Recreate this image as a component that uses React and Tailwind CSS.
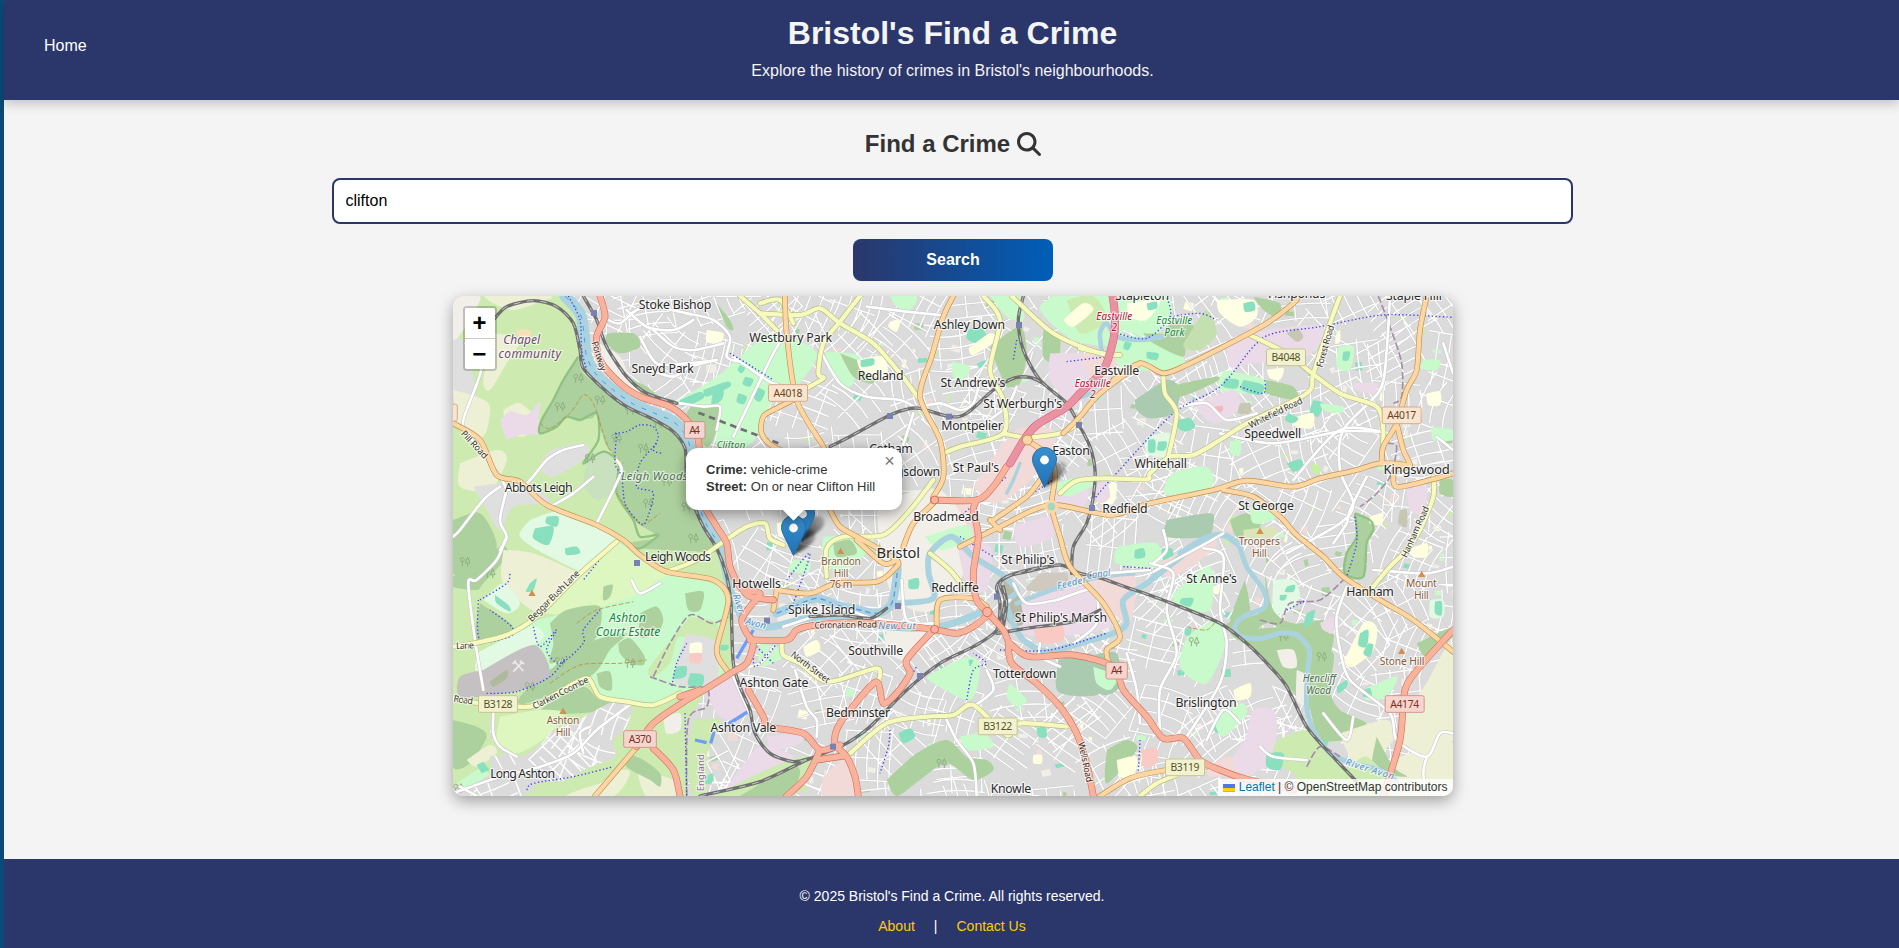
import React from "react";
import { FaMagnifyingGlass } from "react-icons/fa6";

/* ---------- geometry helpers (map units: 3 per pixel) ---------- */
function pts(s) {
  return s.trim().split(/\s+/).map((p) => p.split(",").map(Number));
}

function smooth(s) {
  const p = pts(s);
  let d = `M${p[0][0]} ${p[0][1]}`;
  for (let i = 0; i < p.length - 1; i++) {
    const a = p[i - 1] || p[i];
    const b = p[i];
    const c = p[i + 1];
    const e = p[i + 2] || c;
    d += `C${(b[0] + (c[0] - a[0]) / 7).toFixed(1)} ${(b[1] + (c[1] - a[1]) / 7).toFixed(1)} ${(c[0] - (e[0] - b[0]) / 7).toFixed(1)} ${(c[1] - (e[1] - b[1]) / 7).toFixed(1)} ${c[0]} ${c[1]}`;
  }
  return d;
}

function makeRandom(seed) {
  let s = seed;
  return () => {
    s = (s * 1664525 + 1013904223) % 4294967296;
    return s / 4294967296;
  };
}

/* Residential street blocks: each jittered site gets its own small rotated grid. */
function buildStreets() {
  const r = makeRandom(77);
  let d = "";
  for (let gy = 0; gy < 11; gy++) {
    for (let gx = 0; gx < 21; gx++) {
      const cx = gx * 150 + r() * 90;
      const cy = gy * 150 + r() * 90;
      const a = r() * Math.PI;
      const ca = Math.cos(a);
      const sa = Math.sin(a);
      const step = 27 + r() * 17;
      const bend = (r() - 0.5) * 50;
      const at = (u, v) => `${(cx + u * ca - v * sa).toFixed(0)} ${(cy + u * sa + v * ca).toFixed(0)}`;
      for (let v = -72; v <= 72; v += step) {
        const l = 60 + r() * 34;
        d += `M${at(-l, v)}Q${at(0, v + bend)} ${at(l, v)}`;
      }
      for (let u = -80; u <= 80; u += 60 + r() * 36) {
        d += `M${at(u, -72)}L${at(u + bend / 4, 72)}`;
      }
    }
  }
  return d;
}

function buildPatches() {
  const r = makeRandom(9);
  const fills = ["#c8facc", "#ffffe0", "#88e0be", "#cdebb0", "#f2dad9", "#f2efe9", "#add19e", "#f2efe9"];
  return Array.from({ length: 300 }, (_, i) => {
    const x = 760 + r() * 2260;
    const y = 20 + r() * 1490;
    const w = 8 + r() * 22;
    const h = 7 + r() * 18;
    const k = (r() - 0.5) * 14;
    return { fill: fills[i % fills.length], d: `M${x} ${y}l${w} ${k}l${-k} ${h}l${-w} ${-k}z` };
  });
}

const STREETS = buildStreets();
const PATCHES = buildPatches();

/* ---------- land use ---------- */
const RURAL = "39,18 370,18 425,90 440,210 520,300 640,370 735,440 765,620 850,790 880,930 880,1130 800,1200 740,1300 745,1518 39,1518";
const VILLAGE = "150,1290 165,1340 185,1375 240,1400 300,1365 340,1320 400,1300 450,1270 520,1235 575,1240 560,1310 520,1350 525,1400 480,1420 430,1440 380,1470 300,1480 240,1518 39,1518 60,1480 150,1450 150,1400 190,1395 150,1340";

const AREAS = [
  ["#f2efe9", "39,18 120,18 100,70 70,120 39,150"],
  ["#e0dfdf", "39,150 75,160 110,330 80,380 39,340"],
  ["#eef0d5", "130,18 330,18 290,40 220,60 160,40"],
  ["#eef0d5", "165,130 240,150 200,220 150,300 130,270"],
  ["#eef0d5", "39,300 110,320 150,350 130,440 60,420"],
  ["#f7dfb8", "230,120 270,120 270,145 235,140"],
  ["#eef0d5", "190,360 240,340 300,400 250,440 200,420"],
  ["#ebdbe8", "180,390 210,365 260,375 300,335 295,390 310,430 240,435 200,445"],
  ["#add19e", "415,200 430,250 520,320 640,385 720,420 745,480 765,600 800,710 845,780 780,785 600,775 560,760 650,740 580,690 530,610 545,520 500,470 470,390 420,390 380,380 350,410 300,430 305,390 340,330 370,270"],
  ["#cdebb0", "470,370 480,460 430,520 420,500 400,460"],
  ["#e0dfdf", "330,480 430,460 440,500 340,560 300,530"],
  ["#c9e1bf", "450,490 500,485 530,540 510,610 470,630 430,580"],
  ["#eef0d5", "60,520 170,480 200,510 150,600 60,590"],
  ["#e0dfdf", "100,590 200,580 290,600 330,640 220,650 180,720 130,640"],
  ["#add19e", "39,690 120,670 170,760 140,830 90,830 39,850"],
  ["#add19e", "39,860 180,770 200,800 130,880 110,900 39,890"],
  ["#eef0d5", "190,780 280,790 430,860 400,900 300,970 190,880"],
  ["#e2f9e4", "270,690 360,665 480,720 540,760 460,850 330,800 240,740"],
  ["#88e0be", "320,680 355,680 350,710 318,700"],
  ["#88e0be", "285,715 340,710 325,765 280,745"],
  ["#88e0be", "375,775 410,770 420,790 380,795"],
  ["#e2f9e4", "130,930 190,880 240,940 200,970"],
  ["#88e0be", "165,915 205,945 210,965 170,940"],
  ["#88e0be", "270,880 290,865 280,900 258,905"],
  ["#add19e", "120,940 210,1000 215,1040 110,1050"],
  ["#def6c0", "540,760 680,850 700,880 480,960 310,965 410,865"],
  ["#c8facc", "480,950 600,910 680,860 820,880 865,930 850,1000 830,1080 850,1140 790,1190 640,1240 500,1225 430,1160 320,1140 250,1010"],
  ["#cdebb0", "750,980 830,1000 820,1080 720,1040 690,1120 640,1160 630,1130"],
  ["#add19e", "330,1000 380,960 480,950 470,1040 400,1090 330,1120 340,1060"],
  ["#add19e", "330,1140 440,1060 560,1030 510,1080 450,1160 260,1240 240,1220"],
  ["#add19e", "535,1060 570,1045 612,1095 610,1125 570,1120 540,1090"],
  ["#add19e", "600,970 650,950 670,990 650,1030 600,1040"],
  ["#add19e", "735,910 790,905 780,960 745,960"],
  ["#add19e", "490,890 518,885 510,920 490,930"],
  ["#add19e", "470,1150 510,1145 515,1200 480,1190"],
  ["#e2f9e4", "110,1090 270,1010 310,1030 290,1060 120,1150"],
  ["#c5c1c2", "130,1140 280,1065 330,1150 260,1195 160,1215 60,1220 60,1160"],
  ["#aeb99d", "150,1175 200,1140 200,1165 160,1190"],
  ["#add19e", "39,1290 110,1310 140,1340 90,1420 39,1430"],
  ["#add19e", "340,1230 430,1190 480,1230 560,1240 500,1260 420,1270 300,1270"],
  ["#def6c0", "180,1280 300,1260 370,1270 320,1340 230,1390 170,1360"],
  ["#eef0d5", "80,1410 150,1365 170,1390 110,1430"],
  ["#add19e", "60,1340 110,1310 110,1350 70,1380"],
  ["#eef0d5", "480,1480 540,1440 570,1450 520,1518 380,1518"],
  ["#eef0d5", "590,1440 700,1470 710,1518 620,1518"],
  ["#add19e", "560,1390 610,1410 660,1450 660,1490 630,1470 560,1430"],
  ["#f2efe9", "670,1280 720,1270 720,1320 680,1330"],
  ["#e0dfdf", "740,1030 830,1060 830,1180 790,1190 700,1170"],
  ["#ffffe5", "750,1060 785,1060 780,1110 750,1090"],
  ["#f9c9c4", "750,1090 785,1090 780,1120 748,1115"],
  ["#88e0be", "710,1130 740,1130 735,1160 700,1165"],
  ["#88e0be", "750,1150 790,1155 785,1190 745,1185"],
  ["#88e0be", "842,1065 865,1065 862,1080 842,1080"],
  ["#ebdbe8", "800,1200 900,1160 930,1240 880,1290 830,1270"],
  ["#cdebb0", "760,1290 840,1290 820,1350 800,1400 800,1500 760,1518 740,1400"],
  ["#ebdbe8", "960,1360 1060,1400 1000,1460 860,1500"],
  ["#88e0be", "795,1460 820,1450 815,1480 795,1480"],
  ["#cdebb0", "820,1518 1000,1430 1110,1400 1060,1518"],
  ["#add19e", "900,1518 1050,1430 1080,1450 1040,1518"],
  ["#c8facc", "700,340 830,260 900,200 1000,130 1130,190 1060,300 1000,330 950,440 900,480 830,460 840,360 760,350"],
  ["#c8facc", "960,190 1030,140 1090,260 1050,270"],
  ["#add19e", "750,350 840,350 830,420 800,470 740,390"],
  ["#88e0be", "720,330 780,305 790,325 730,350"],
  ["#88e0be", "790,300 860,275 870,290 800,320"],
  ["#88e0be", "900,225 915,235 905,250 893,240"],
  ["#88e0be", "915,260 940,268 930,290 908,282"],
  ["#88e0be", "950,290 975,305 960,335 940,320"],
  ["#88e0be", "895,310 920,320 912,342 890,335"],
  ["#88e0be", "820,300 850,300 845,330 815,345"],
  ["#add19e", "500,130 580,130 600,170 540,190 500,160"],
  ["#add19e", "540,250 620,290 660,320 700,330 690,350 600,320"],
  ["#f2efe9", "460,150 540,200 570,270 600,310 500,240"],
  ["#ffffe5", "800,120 850,130 840,160 800,155"],
  ["#add19e", "830,40 870,90 880,120 860,110"],
  ["#c8facc", "1155,185 1260,200 1230,290 1170,250"],
  ["#add19e", "1200,190 1290,230 1300,280 1240,260"],
  ["#ffffe5", "1250,210 1330,200 1340,260 1270,250"],
  ["#88e0be", "1262,210 1300,205 1300,225 1265,230"],
  ["#c8facc", "1350,18 1430,18 1410,60 1370,50"],
  ["#ffffe5", "1350,95 1380,90 1370,125 1345,110"],
  ["#88e0be", "1585,120 1620,110 1640,140 1610,160 1580,145"],
  ["#ffffe0", "1585,175 1650,130 1670,150 1600,195"],
  ["#c8facc", "1535,215 1590,230 1570,270 1540,260"],
  ["#88e0be", "1610,220 1640,210 1620,235"],
  ["#add19e", "1650,170 1740,110 1760,190 1740,280 1700,290 1680,250"],
  ["#c8facc", "1650,18 1740,18 1750,90 1700,80"],
  ["#c8facc", "1840,18 2020,18 2040,160 1900,150 1800,60"],
  ["#cdebb0", "1880,30 1960,18 2000,90 1920,130"],
  ["#ffffe0", "1870,90 1930,40 1960,60 1900,110"],
  ["#add19e", "1810,120 1860,150 1850,220 1810,200"],
  ["#ebdbe8", "1830,190 1960,200 1970,290 1900,340 1830,270"],
  ["#f2dad9", "1920,190 2040,190 2010,260 1960,280"],
  ["#f2dad9", "1600,590 1730,420 1850,430 1780,560 1670,640"],
  ["#f2dad9", "1490,650 1610,650 1600,780 1490,740"],
  ["#f2efe9", "1310,640 1500,600 1600,780 1480,960 1360,920 1320,760"],
  ["#c8facc", "1455,740 1580,705 1590,750 1500,780"],
  ["#ebdbe8", "1720,710 1830,680 1840,740 1740,770"],
  ["#ebdbe8", "1840,600 1940,590 1930,650 1840,650"],
  ["#c8facc", "1840,580 1930,560 1970,580 1880,620"],
  ["#c8facc", "1150,740 1290,740 1280,790 1200,850 1150,800"],
  ["#add19e", "1180,760 1230,750 1250,790 1190,800"],
  ["#88e0be", "1405,870 1435,865 1435,895 1407,895"],
  ["#c8facc", "1060,810 1110,815 1100,850 1045,840"],
  ["#ffffe0", "1010,700 1060,690 1070,720 1020,740"],
  ["#f2efe9", "1020,940 1190,960 1150,1010 1020,1000"],
  ["#ebdbe8", "1700,940 2000,880 2010,1010 1800,1040 1730,1010"],
  ["#f9c9c4", "1780,1020 1860,1000 1870,1050 1800,1060"],
  ["#b7b9a5", "1690,870 1730,890 1750,1000 1700,990"],
  ["#f2dad9", "1920,860 2080,850 2070,1000 2010,960 1960,900"],
  ["#cfc9bf", "1800,850 1880,850 1870,900 1760,900"],
  ["#ebdbe8", "1550,750 1650,770 1640,900 1580,880"],
  ["#f2efe9", "1340,1020 1480,1030 1400,1110 1340,1080"],
  ["#c8facc", "1460,1160 1580,1100 1620,1130 1590,1230 1480,1180"],
  ["#88e0be", "1585,1110 1600,1110 1590,1130"],
  ["#ffffe0", "1090,1070 1130,1050 1140,1080 1100,1100"],
  ["#c8facc", "960,1060 1010,1070 1030,1100 960,1130"],
  ["#aacbaf", "1855,1110 1960,1095 1980,1210 1855,1205"],
  ["#aacbaf", "1960,1095 2030,1090 2040,1190 1980,1210"],
  ["#c8facc", "1710,1180 1760,1230 1730,1250 1700,1220"],
  ["#88e0be", "1375,1330 1410,1315 1425,1340 1390,1360"],
  ["#88e0be", "1790,1315 1815,1310 1820,1340 1795,1340"],
  ["#ffffe0", "1780,1395 1805,1395 1805,1420 1780,1420"],
  ["#add19e", "1340,1470 1430,1390 1520,1350 1580,1400 1640,1410 1660,1440 1600,1470 1520,1420 1440,1470 1370,1518"],
  ["#c8facc", "1560,1340 1630,1330 1660,1370 1580,1380"],
  ["#f2dad9", "1150,1460 1230,1400 1260,1518 1150,1518"],
  ["#ebdbe8", "980,1340 1080,1330 1080,1360 1000,1380"],
  ["#c8facc", "2030,30 2180,18 2190,90 2130,140 2040,110"],
  ["#ffffe5", "2060,40 2160,30 2120,90 2070,80"],
  ["#88e0be", "2120,40 2150,35 2150,55 2125,60"],
  ["#add19e", "2180,110 2230,90 2270,120 2240,160 2180,150"],
  ["#c8facc", "2030,130 2100,140 2200,150 2230,200 2220,240 2040,230"],
  ["#add19e", "2110,130 2220,140 2230,200 2140,160"],
  ["#88e0be", "2055,155 2075,160 2065,180 2050,175"],
  ["#88e0be", "2120,185 2155,190 2150,210 2122,205"],
  ["#c4e0b0", "2250,130 2300,60 2330,130 2280,180 2230,170"],
  ["#ffffe5", "2330,30 2440,30 2450,80 2400,110 2340,70"],
  ["#88e0be", "2410,40 2440,35 2445,60 2415,65"],
  ["#add19e", "2440,20 2520,40 2510,80 2470,60"],
  ["#ebdbe8", "2360,150 2480,120 2650,110 2600,200 2440,220 2370,230"],
  ["#c7c7b4", "2540,130 2570,115 2590,140 2570,155"],
  ["#aacbaf", "2085,330 2180,270 2220,300 2200,370 2130,385 2090,360"],
  ["#add19e", "2180,290 2330,260 2320,280 2220,320"],
  ["#c8facc", "2350,240 2480,270 2480,310 2340,300"],
  ["#88e0be", "2355,265 2395,270 2390,295 2350,290"],
  ["#88e0be", "2410,270 2470,285 2460,315 2405,300"],
  ["#add19e", "2480,270 2560,290 2570,330 2480,310"],
  ["#ebdbe8", "2270,340 2380,300 2400,350 2330,400 2280,370"],
  ["#c7c7b4", "2400,340 2430,340 2430,370 2395,370"],
  ["#f9b6b8", "2325,350 2348,348 2346,365 2325,365"],
  ["#ffffe5", "2480,240 2530,235 2520,270 2490,265"],
  ["#88e0be", "2620,330 2650,340 2635,380 2610,365"],
  ["#c8facc", "2640,340 2710,350 2700,370 2650,360"],
  ["#ffffe0", "2570,380 2620,370 2615,415 2560,405"],
  ["#88e0be", "2545,370 2575,385 2560,400 2535,390"],
  ["#88e0be", "2215,390 2250,385 2265,410 2235,425 2210,410"],
  ["#e2f9e4", "2120,440 2190,430 2180,500 2120,490"],
  ["#88e0be", "2125,450 2145,450 2145,485 2125,485"],
  ["#88e0be", "2155,455 2180,455 2175,480 2152,480"],
  ["#c8facc", "2170,600 2200,550 2300,530 2315,590 2190,615"],
  ["#ffffe5", "2690,130 2700,120 2700,155 2685,160"],
  ["#c8facc", "2695,170 2740,170 2730,240 2690,230"],
  ["#88e0be", "2710,185 2730,185 2725,210 2708,210"],
  ["#ebdbe8", "2740,280 2810,280 2800,310 2750,300"],
  ["#c8facc", "2950,210 3000,210 2990,240 2940,235"],
  ["#ffffe5", "2960,310 3000,305 3000,345 2965,345"],
  ["#c8facc", "2975,410 3039,420 3039,450 2980,450"],
  ["#c8facc", "2370,455 2400,450 2400,495 2370,490"],
  ["#88e0be", "2540,520 2580,508 2590,530 2560,545"],
  ["#c5f0a0", "2615,520 2640,530 2635,555 2615,540"],
  ["#ffffe5", "1985,590 2030,580 2020,640 1980,640"],
  ["#aacbaf", "2180,690 2310,670 2320,700 2300,740 2180,740"],
  ["#add19e", "2370,690 2420,670 2460,700 2450,740 2390,740"],
  ["#c8facc", "2430,650 2500,650 2500,690 2440,700"],
  ["#dbe5b8", "2410,720 2500,710 2500,740 2420,745"],
  ["#add19e", "2745,670 2790,690 2800,720 2780,760 2770,860 2715,850 2720,790 2750,740"],
  ["#ffffe0", "2790,680 2830,670 2820,705 2790,700"],
  ["#ebdbe8", "2900,600 2960,590 2950,670 2910,660"],
  ["#c7c7b4", "2880,660 2900,660 2900,710 2875,700"],
  ["#add19e", "3000,570 3039,570 3039,620 3000,610"],
  ["#ebdbe8", "2000,560 2010,620 1980,640 1960,600"],
  ["#c8facc", "2030,770 2150,760 2150,830 2030,820"],
  ["#88e0be", "2085,780 2110,775 2115,800 2085,805"],
  ["#88e0be", "2165,775 2195,775 2200,805 2170,810"],
  ["#f2dad9", "2140,830 2290,750 2330,770 2200,860"],
  ["#c8facc", "2200,910 2310,830 2310,960 2210,950"],
  ["#88e0be", "2225,925 2260,925 2250,950 2220,940"],
  ["#c8facc", "2240,1040 2330,990 2360,1050 2300,1180 2220,1130"],
  ["#88e0be", "2235,1015 2255,1015 2250,1035 2235,1035"],
  ["#ffffe5", "2320,890 2340,890 2338,910 2320,910"],
  ["#add19e", "2415,870 2430,960 2400,1010 2370,1000 2390,930"],
  ["#add19e", "2475,850 2500,960 2560,1000 2650,990 2670,1020 2540,1020 2480,1000 2400,1050 2360,1010 2380,990 2470,960"],
  ["#e2f9e4", "2500,870 2560,870 2580,920 2540,970 2500,960"],
  ["#88e0be", "2540,890 2565,885 2560,905 2535,905"],
  ["#88e0be", "2520,915 2540,915 2535,930 2520,930"],
  ["#88e0be", "2600,970 2625,960 2615,1000 2590,1010"],
  ["#add19e", "2370,1020 2600,1010 2680,1030 2650,1100 2610,1160 2590,1220 2530,1180 2440,1080 2380,1040"],
  ["#f2efe9", "2510,1080 2560,1080 2570,1130 2530,1130"],
  ["#add19e", "2610,1080 2680,1090 2670,1200 2700,1260 2780,1300 2760,1340 2640,1350 2610,1260 2560,1200"],
  ["#f2efe9", "2570,1140 2600,1160 2600,1240 2570,1230"],
  ["#add19e", "2640,1030 2680,1030 2670,1090 2630,1060"],
  ["#ffffe0", "2710,1120 2770,1000 2810,1010 2800,1080 2740,1130"],
  ["#88e0be", "2760,1030 2785,1020 2780,1070 2755,1065"],
  ["#88e0be", "2785,1060 2800,1065 2790,1100 2770,1090"],
  ["#88e0be", "2690,1190 2720,1170 2720,1190 2695,1210"],
  ["#c8facc", "2770,1200 2870,1160 2840,1220 2780,1230"],
  ["#88e0be", "2770,1200 2790,1195 2795,1220 2770,1220"],
  ["#ebdbe8", "2640,1000 2680,980 2680,1030 2650,1020"],
  ["#e2f9e4", "2970,930 3010,930 3010,980 2970,980"],
  ["#88e0be", "2985,935 3005,935 3005,975 2985,970"],
  ["#ffffe0", "2900,780 2960,760 2960,800 2920,800"],
  ["#add19e", "2930,1060 3039,1010 3039,1040 2960,1100"],
  ["#eef0d5", "2960,1180 3039,1060 3039,1350 2900,1380 2880,1300"],
  ["#eef0d5", "2700,1330 2840,1290 2860,1350 2780,1420 2730,1400"],
  ["#eef0d5", "2880,1400 3039,1360 3039,1518 2830,1518 2850,1440"],
  ["#add19e", "2810,1340 2860,1430 2900,1460 2800,1440"],
  ["#cdebb0", "2440,1390 2600,1320 2700,1420 2860,1518 2600,1518 2560,1450"],
  ["#ebdbe8", "2380,1400 2480,1260 2500,1320 2450,1440 2410,1470 2340,1450"],
  ["#ebdbe8", "2420,1340 2440,1260 2500,1260 2510,1330 2480,1430 2420,1430"],
  ["#88e0be", "2480,1390 2530,1390 2520,1440 2480,1430"],
  ["#ffffe0", "2380,1200 2430,1180 2430,1220 2390,1230"],
  ["#88e0be", "2325,1300 2365,1300 2360,1330 2325,1325"],
  ["#c8facc", "2320,1290 2400,1240 2420,1270 2350,1340"],
  ["#add19e", "2000,1380 2060,1350 2090,1380 2000,1480"],
  ["#ffffe0", "2030,1410 2090,1400 2080,1460 2040,1460"],
  ["#f9c9c4", "2105,1380 2150,1375 2150,1420 2110,1430"],
  ["#f2dad9", "2300,1430 2370,1400 2380,1450 2310,1460"],
  ["#c8facc", "1960,1130 2030,1160 2010,1200 1970,1180"],
  ["#cdebb0", "2700,1460 2780,1400 2850,1500 2700,1518"],
];

const WATER = [
  [34, "375,18 420,70 432,130 440,200 470,255 520,300 580,342 640,368 700,395 740,440 755,500 768,580 778,650 800,705 840,765"],
  [22, "840,765 858,850 880,925 905,980 940,1005 1000,1010 1100,985 1200,980 1330,1008 1500,1010 1640,960"],
  [26, "1010,970 1060,950 1130,925 1190,945 1260,960 1310,970 1355,940 1372,840 1362,800"],
  [18, "1375,940 1480,925 1466,850 1470,790 1535,740 1600,800 1680,850 1730,900 1700,940 1720,1000 1750,1050 1820,1085 1920,1060 2020,1030 2060,1000 2050,930 2120,880 2210,810 2290,750 2350,735 2390,760"],
  [14, "1730,940 1850,895 1980,860 2080,850"],
  [15, "2220,790 2290,745 2350,735 2395,765 2420,830 2470,900 2475,950 2410,980 2385,1010 2400,1038 2460,1046 2520,1030 2570,1035 2608,1080 2602,1150 2600,1250 2620,1320 2670,1390 2740,1420 2820,1440 2870,1475"],
  [14, "1985,180 1980,130 2000,100 2030,140 2100,150 2170,140"],
  [12, "1980,270 1950,310 1900,330"],
  [10, "1740,520 1720,570 1700,610"],
];

const WHITE = [
  "75,160 125,230 70,390 90,440 180,560 200,600",
  "180,590 130,630 60,720 39,740", "200,600 180,690 200,740 180,780",
  "200,600 260,580 320,510 370,480 430,465", "340,645 400,610 460,560", "470,700 520,600 545,540 530,510",
  "195,750 170,810 110,870 85,880 105,1050 130,1200", "160,1270 160,1330 180,1370 230,1400",
  "39,1510 180,1460 300,1430 400,1390 470,1320 575,1240", "60,1490 110,1518", "430,1390 420,1330 450,1310",
  "575,870 600,910 660,880", "880,1140 960,1120 1000,1070", "880,1160 920,1250 960,1330",
  "505,90 540,100 590,60 640,50 740,70 820,90 870,140 860,200 900,215", "560,60 620,110 700,120 760,90", "600,140 650,220 740,220 830,210", "640,120 700,170 760,180 850,160",
  "630,240 700,260 750,230 830,210", "960,18 830,18", "1040,130 1000,190 880,440", "720,340 790,350 840,350 830,420",
  "880,200 980,270 1030,290", "1140,180 1200,280 1280,320 1380,330 1440,360", "1280,50 1400,65 1500,75",
  "1440,350 1500,340 1560,360 1600,340 1620,270", "1420,370 1380,490 1340,560", "1730,290 1700,350 1620,410",
  "1720,880 1760,940 1850,930 1960,900 1970,1000 1900,1060", "1385,870 1400,990 1480,1000",
  "1030,1010 1200,960 1300,985 1480,1010", "1065,1140 1100,1250 1130,1290 1130,1340", "1520,1290 1550,1350 1600,1420 1610,1518",
  "1640,1140 1660,1200 1600,1250", "1800,1060 1800,1100 1860,1130", "1710,930 1680,960",
  "2130,820 2200,850 2180,960 2210,1090 2160,1200 2160,1330", "2290,775 2350,800 2340,960 2360,1060 2340,1180 2240,1340",
  "2140,845 2280,770 2350,730", "2000,850 2130,840", "2560,570 2700,420 2850,430", "2340,430 2500,460 2700,425 2820,425",
  "2850,18 2840,180 2820,300 2710,420 2700,540 2740,640 2700,700 2540,790", "2780,560 2730,660 2720,700 2680,760",
  "2720,890 2690,980 2700,1080 2730,1170 2850,1270 2870,1350 2960,1400 3000,1330 3039,1330",
  "2800,840 2960,850 3039,830", "2960,1400 2950,1450 2960,1518", "3010,160 3039,250", "2990,440 3039,480",
  "2460,1370 2500,1400 2600,1410", "2400,1300 2350,1260 2300,1350", "2220,350 2300,340 2360,390 2450,370",
  "2650,1270 2720,1350 2740,1280", "2170,720 2180,780 2140,820", "2060,1090 2090,1200 2100,1300",
];

const YELLOW = [
  "960,70 1080,75 1140,55 1200,100 1300,160 1380,250 1440,330", "1260,18 1200,95 1150,160 1135,250 1150,265 1090,300",
  "900,18 960,70 1010,120", "1630,18 1680,90 1650,240 1690,330 1690,430 1560,470 1510,490", "1690,430 1760,442 1860,430 1920,400",
  "1715,18 1840,130 1980,190 2040,195", "1920,175 2010,195", "2430,135 2540,190 2610,245 2700,310 2810,350 2830,420 2825,500",
  "2700,18 2670,100 2620,250 2600,310 2420,400 2340,450 2260,495 2190,500 2130,550 2120,568 2000,565 1910,572 1860,610",
  "2170,250 2175,310 2210,370 2185,500", "2980,560 2980,620 2940,720 2900,780 2850,830 2800,890",
  "39,1070 100,1060 200,1035 290,980 410,860 530,755", "39,1225 120,1240 270,1250 350,1210 440,1165 480,1220 560,1235 640,1245 720,1210",
  "1025,1060 1030,1095 1080,1120 1165,1175 1310,1135 1315,1180", "1230,1390 1340,1300 1460,1280 1540,1275 1600,1245 1700,1335 1740,1300 1880,1310",
  "1480,570 1410,660 1330,735 1210,740 1160,775 1160,860", "680,845 770,810 850,755 920,710 975,700 990,745 1030,765",
  "2100,1518 2150,1480 2210,1455", "1470,790 1530,840 1570,890", "960,40 1020,30 1060,100",
];

const ORANGE = [
  "39,400 120,450 170,555 240,575 320,645 470,705 550,750 600,795 680,845 820,870 865,930 830,1080 860,1140",
  "1035,18 1040,130 1070,330 1150,470 1180,540", "1070,325 1010,355 970,380 965,430 1000,470 1080,500",
  "1540,18 1510,80 1475,200 1440,320 1500,450 1510,560 1480,620", "2100,220 1980,310 1920,380 1870,430",
  "1760,450 1830,500 1845,560 1835,650 1860,740 1890,830 1990,940 2040,1040 2000,1080 2010,1130",
  "1660,690 1760,620 1800,570", "1560,770 1680,710 1830,645 2010,675 2130,640 2320,600 2420,572 2560,590 2640,565 2750,540 2820,520 2910,525",
  "2350,600 2440,620 2520,680 2570,735 2650,800 2710,860 2820,930 2920,990 3039,1085",
  "2020,270 2100,220 2170,250 2240,225 2370,160 2480,100 2560,40 2575,18",
  "2960,18 2940,120 2930,240 2900,300 2870,400 2830,470 2825,520", "2870,400 2890,480 2910,530 2865,540 2870,590 2970,570 3039,550",
  "600,1360 540,1430 465,1518", "1980,1518 2070,1465 2180,1440 2300,1430", "1490,1010 1500,930 1600,925 1640,950",
  "1390,770 1420,700 1480,640", "1010,900 1110,910 1190,880 1310,875 1360,840 1370,810 1260,745 1200,710 1170,660", "1010,900 1000,960",
  "1650,690 1680,720", "1250,750 1330,820 1370,810",
];

const RED = [
  "480,18 495,80 470,140 480,210 540,280 600,320 690,350 740,390 775,450 780,560 790,640 830,710 860,760 870,830 905,895 960,910 930,950 905,990 920,1030 940,1060 920,1120 880,1145 800,1195 740,1230 640,1300 590,1370",
  "780,1200 720,1220", "640,1375 700,1440 720,1518", "925,1200 970,1280 985,1310 1090,1330 1140,1380 1200,1365",
  "930,1050 1040,1050 1070,1020 1130,1005 1260,998 1460,1015 1550,1030 1600,1010 1650,970",
  "1700,530 1660,590 1610,630 1480,630", "1610,630 1600,660 1615,740 1600,850 1610,930 1640,965 1690,1020 1710,1060 1770,1100 1900,1095 2020,1130 2050,1200 2120,1280 2170,1345 2230,1345 2280,1410 2340,1440 2420,1468 2560,1500",
  "1705,1060 1715,1120 1790,1180 1860,1250 1910,1330 1940,1420 1960,1518",
  "1480,1020 1400,1110 1410,1150 1370,1210 1330,1240 1315,1180 1290,1190 1200,1300 1185,1360 1220,1400 1245,1460 1255,1518",
  "1140,1380 1100,1460 1040,1518", "1130,1410 1210,1398", "3039,1020 2940,1130 2895,1200 2880,1350 2830,1518",
  "905,895 930,920 1000,930",
];

const MOTORWAY = ["2018,18 2025,80 2020,150 1990,240 1920,310 1880,350 1790,405 1755,445 1710,520"];

const RAIL = [
  "160,90 200,50 280,32 350,50 400,100 420,180 430,235 500,305 560,350 640,388 700,425 735,475 740,560 760,640 790,710 830,775 858,850 872,930 875,1000 880,1120 900,1190 930,1260 945,1330 990,1390 1060,1415 1110,1405",
  "430,18 470,90 500,170 560,260 620,310 710,340",
  "780,1518 960,1475 1100,1410 1210,1365 1290,1310 1400,1200 1500,1120 1600,1070 1670,1020 1680,940 1670,890 1700,860 1760,845 1860,825 1920,850 1985,865 2060,892 2120,912 2220,950 2340,1000 2420,1060 2490,1130 2540,1190 2600,1310 2660,1380 2750,1475",
  "1670,1030 1760,1015 1900,995 1980,960", "1750,18 1735,90 1750,180 1800,270 1880,340 1920,410 1950,470 1965,540 1960,620 1940,700 1900,770 1895,850",
  "1170,470 1220,445 1350,375 1400,358 1440,355 1530,380 1580,370 1660,300 1720,265 1770,262 1810,280",
  "1110,980 1200,975 1290,985 1340,955", "1690,890 1700,940 1690,1010", "1680,1010 1695,930 1680,880 1720,852 1800,832",
];

const PATHS = [
  "525,430 560,425 600,405 640,410 655,440 640,480 665,490", "530,430 525,520 545,560 555,640 590,690 615,700 640,610 590,590 600,520 650,460",
  "385,18 420,90 425,180 440,240", "870,190 920,220 1000,270", "1730,150 1720,210", "1880,215 2000,200",
  "2030,130 2120,145 2190,80 2180,20", "2190,80 2280,70 2330,90", "2020,560 2200,370 2340,290 2440,170 2500,130 2640,110 2830,75 3039,82",
  "2400,290 2470,310 2475,270", "1560,680 1700,560", "1560,740 1660,800", "1730,640 1840,570", "1960,630 2010,570",
  "120,930 200,880 210,850", "115,930 120,1050 210,1040 215,1010 150,960", "280,1010 300,1070 350,1020 320,1080 360,1120 430,1060 430,1020 480,960",
  "140,1210 230,1205 330,1160 380,1100", "740,1060 710,1120 695,1190", "735,1270 740,1518", "510,770 430,870", "260,1500 280,1480 400,1460 520,1430",
  "945,1050 945,1130 1020,1050", "950,1070 1000,1120", "1580,1230 1600,1140 1640,1120 1600,1090", "1350,1320 1345,1370 1320,1450",
  "1380,1210 1430,1130", "2745,680 2750,760 2720,860", "2540,960 2600,930", "2050,830 2130,835", "2100,1350 2095,1450", "1680,1080 1830,1080 2000,1030", "1040,870 1110,790 1060,940",
];

const BOUNDARY = [
  "640,1160 690,1060 750,975 815,1000 865,980", "630,1160 720,1190 800,1195 800,1250 745,1290 740,1518",
  "2815,18 2850,110 2885,220 2885,320 2860,340", "2840,460 2870,470 2850,560 2800,620 2760,650", "2460,990 2520,1000 2550,940 2640,930 2710,870", "2600,1430 2640,1370 2700,1400",
];

/* text, x (middle), baseline y, width */
const PLACES = [
  ["Stoke Bishop", 705, 57, 218], ["Sneyd Park", 668, 249, 187], ["Abbots Leigh", 296, 606, 203], ["Westbury Park", 1052, 156, 248],
  ["Redland", 1322, 270, 137], ["Ashley Down", 1588, 116, 214], ["St Andrew's", 1599, 290, 195], ["St Werburgh's", 1748, 353, 237],
  ["Montpelier", 1596, 421, 185], ["Cotham", 1353, 490, 131], ["Kingsdown", 1408, 558, 185], ["St Paul's", 1608, 547, 139],
  ["Easton", 1893, 496, 113], ["Broadmead", 1518, 693, 197], ["Eastville", 2030, 254, 135], ["Stapleton", 2106, 31, 162],
  ["Fishponds", 2570, 23, 172], ["Staple Hill", 2922, 31, 168], ["Whitehall", 2162, 533, 157], ["Speedwell", 2498, 445, 171],
  ["Redfield", 2055, 669, 136], ["St George", 2478, 660, 167], ["Leigh Woods", 714, 812, 198], ["Hotwells", 950, 893, 146],
  ["Spike Island", 1145, 972, 202], ["Redcliffe", 1545, 905, 143], ["St Philip's", 1764, 823, 160], ["St Philip's Marsh", 1863, 996, 277],
  ["Southville", 1307, 1096, 165], ["Ashton Gate", 1002, 1191, 207], ["Ashton Vale", 910, 1327, 197], ["Bedminster", 1254, 1281, 192],
  ["Totterdown", 1754, 1164, 190], ["Knowle", 1713, 1509, 121], ["St Anne's", 2315, 879, 152], ["Brislington", 2298, 1252, 183],
  ["Hanham", 2790, 919, 142], ["Long Ashton", 248, 1465, 195],
];

const SHIELDS = [
  ["A4", 764, 420, 62, "#f7d5cf", "#c9908a", "#7d2f24"], ["A4018", 1044, 309, 117, "#f8e4cf", "#d9a98a", "#6a4320"],
  ["B4048", 2538, 202, 117, "#f2f2d0", "#c8c48f", "#52531f"], ["A4017", 2885, 376, 117, "#f8e4cf", "#d9a98a", "#6a4320"],
  ["B3128", 174, 1242, 117, "#f2f2d0", "#c8c48f", "#52531f"], ["A370", 600, 1347, 98, "#f7d5cf", "#d3968a", "#7d2f24"],
  ["B3122", 1673, 1309, 117, "#f2f2d0", "#c8c48f", "#52531f"], ["A4", 2030, 1142, 64, "#f7d5cf", "#d3968a", "#7d2f24"],
  ["B3119", 2235, 1432, 117, "#f2f2d0", "#c8c48f", "#52531f"], ["A4174", 2894, 1242, 117, "#f7d5cf", "#d3968a", "#7d2f24"],
];

/* text, x, baseline, width, colour, size, italic, rotation */
const SMALL = [
  ["Chapel", 245, 162, 110, "#734a73", 36, true, 0], ["Hill community", 236, 205, 254, "#734a73", 36, true, 0],
  ["Clifton", 873, 473, 86, "#2a8a3c", 29, true, 0], ["Leigh Woods", 643, 569, 200, "#4c7050", 34, true, 0],
  ["Ashton", 563, 995, 110, "#128a3c", 36, true, 0], ["Court Estate", 564, 1037, 194, "#128a3c", 36, true, 0],
  ["Eastville", 2203, 102, 108, "#128a3c", 30, true, 0], ["Park", 2203, 137, 60, "#128a3c", 30, true, 0],
  ["Eastville", 2023, 90, 108, "#b8123c", 30, true, 0], ["2", 2023, 124, 16, "#b8123c", 30, true, 0],
  ["Eastville", 1958, 290, 108, "#b8123c", 30, true, 0], ["2", 1958, 325, 16, "#b8123c", 30, true, 0],
  ["Brandon", 1203, 824, 120, "#8a5a3c", 31, false, 0], ["Hill", 1203, 860, 44, "#8a5a3c", 31, false, 0], ["76 m", 1203, 895, 68, "#8a5a3c", 31, false, 0],
  ["Ashton", 369, 1303, 98, "#8a5a3c", 31, false, 0], ["Hill", 369, 1338, 44, "#8a5a3c", 31, false, 0],
  ["Troopers", 2458, 766, 124, "#8a5a3c", 31, false, 0], ["Hill", 2458, 801, 44, "#8a5a3c", 31, false, 0],
  ["Mount", 2944, 892, 92, "#8a5a3c", 31, false, 0], ["Hill", 2944, 928, 44, "#8a5a3c", 31, false, 0],
  ["Stone Hill", 2886, 1125, 134, "#8a5a3c", 31, false, 0],
  ["Hencliff", 2638, 1175, 100, "#4c7050", 30, true, 0], ["Wood", 2636, 1211, 74, "#4c7050", 30, true, 0],
  ["River", 897, 950, 58, "#5a8fbf", 29, true, 72], ["Avon", 948, 1010, 62, "#5a8fbf", 29, true, 14],
  ["New Cut", 1371, 1018, 112, "#5a8fbf", 29, true, 0], ["Feeder", 1895, 888, 90, "#5a8fbf", 29, true, -14], ["Canal", 1975, 862, 72, "#5a8fbf", 29, true, -8],
  ["River Avon", 2790, 1447, 150, "#5a8fbf", 28, true, 17],
  ["Portway", 478, 208, 92, "#3a2a24", 27, false, 72], ["Pill Road", 104, 473, 104, "#3a2a14", 27, false, 47],
  ["Beggar Bush Lane", 341, 927, 205, "#33331a", 27, false, -45], ["Lane", 75, 1076, 54, "#33331a", 27, false, -3],
  ["Road", 70, 1239, 58, "#33331a", 27, false, 8], ["Clarken Coombe", 361, 1218, 184, "#33331a", 27, false, -27],
  ["North Street", 1112, 1141, 138, "#33331a", 27, false, 37], ["Coronation Road", 1217, 1014, 188, "#3a2a24", 27, false, -1],
  ["Wells Road", 1937, 1426, 122, "#3a2a24", 27, false, 78], ["Forest Road", 2655, 178, 130, "#33331a", 27, false, -74],
  ["Whitefield Road", 2506, 378, 176, "#33331a", 27, false, -26], ["Hanham Road", 2925, 735, 165, "#33331a", 27, false, -66],
  ["England", 783, 1458, 112, "#8d6f95", 29, false, -90],
];

const STATIONS = ["462,69", "1350,378", "1527,380", "1917,405", "1956,654", "1737,105", "591,819", "981,992", "1374,948", "1671,920", "1440,1158", "1179,1370"];
const PEAKS = ["276,910", "369,1264", "1202,784", "2460,724", "2945,853", "2885,1084"];
const TREES = ["415,265", "360,350", "480,330", "570,360", "530,445", "610,475", "450,505", "680,575", "625,640", "740,650", "655,400", "75,815", "150,850", "270,1190", "360,1115", "570,1120", "760,745", "2262,1055", "55,1495", "1505,1420", "2530,1040", "2645,1100"];

function Lines({ items, color, casing, width, cased }) {
  return (
    <g fill="none" strokeLinecap="round" strokeLinejoin="round">
      {casing && items.map((s, i) => <path key={"c" + i} d={smooth(s)} stroke={casing} strokeWidth={cased} />)}
      {items.map((s, i) => <path key={i} d={smooth(s)} stroke={color} strokeWidth={width} />)}
    </g>
  );
}

function MapLabel({ text, x, y, w, color, size, italic, rotate }) {
  return (
    <text
      x={x}
      y={y}
      textAnchor="middle"
      textLength={w}
      fontSize={size}
      fontStyle={italic ? "italic" : "normal"}
      fill={color}
      stroke="#fff"
      strokeOpacity="0.65"
      strokeWidth="7"
      strokeLinejoin="round"
      paintOrder="stroke"
      transform={rotate ? `rotate(${rotate} ${x} ${y - 10})` : undefined}
    >
      {text}
    </text>
  );
}

function MapCanvas() {
  return (
    <svg className="block h-[500px] w-[1000px] font-['Noto_Sans',sans-serif]" viewBox="39 18 3000 1500">
      <defs>
        <clipPath id="village"><path d={smooth(VILLAGE) + "Z"} /></clipPath>
      </defs>
      <rect x="39" y="18" width="3000" height="1500" fill="#dcdbdb" />
      <g>{PATCHES.map((p, i) => <path key={i} d={p.d} fill={p.fill} />)}</g>
      <path d={STREETS} fill="none" stroke="#cbcbcb" strokeWidth="6.5" />
      <path d={STREETS} fill="none" stroke="#fff" strokeWidth="4.2" />
      <polygon points={RURAL} fill="#cdebb0" />
      {AREAS.map(([fill, p], i) => (
        <path key={i} d={smooth(p + " " + p.split(" ")[0]) + "Z"} fill={fill} />
      ))}
      <g clipPath="url(#village)">
        <rect x="39" y="1200" width="600" height="320" fill="#dcdbdb" />
        <path d={STREETS} fill="none" stroke="#fff" strokeWidth="4.2" />
      </g>
      <path d="M50 1480L125 1430L150 1455L80 1495z" fill="#c8facc" />
      <path d="M110 1425L130 1415L148 1440L125 1450z" fill="#88e0be" />
      <g fill="none" stroke="#8fc283" strokeWidth="7" strokeLinejoin="round">
        <path d={smooth("415,200 370,270 340,330 305,390 300,430 350,410 380,380 420,390 470,370 475,450 430,520 490,485 535,520 530,610 580,690 600,740 655,735 600,775 560,765")} />
        <path d={smooth("2745,670 2790,690 2800,720 2780,760 2770,860 2715,850 2720,790 2750,740 2745,670")} />
      </g>
      <g fill="none" stroke="#8fae82" strokeWidth="3">
        {TREES.map((t) => {
          const [x, y] = t.split(",").map(Number);
          return (
            <g key={t}>
              <circle cx={x - 8} cy={y - 6} r="6" />
              <path d={`M${x - 8} ${y}v14M${x + 8} ${y - 14}l-7 18h14zM${x + 8} ${y + 4}v10`} />
            </g>
          );
        })}
      </g>
      <g fill="none" strokeLinecap="round" strokeLinejoin="round">
        {WATER.map(([w, s], i) => <path key={i} d={smooth(s)} stroke="#aad3df" strokeWidth={w} />)}
      </g>
      <path d={smooth(WATER[0][1])} fill="none" stroke="#4c9be8" strokeWidth="3" strokeDasharray="14 22" />
      <path d={smooth(WATER[2][1])} fill="none" stroke="#5b97e8" strokeWidth="4" strokeDasharray="16 12" />
      <path d="M890 1105L940 1020M865 1302L922 1266M765 1350L800 1358M812 1360L822 1325" stroke="#6f9cf5" strokeWidth="10" />
      <g fill="none" stroke="#a58da8" strokeWidth="5" strokeDasharray="22 8">
        {BOUNDARY.map((s, i) => <path key={i} d={smooth(s)} />)}
      </g>
      <g fill="none" stroke="#b98f3a" strokeWidth="2.5" strokeDasharray="14 6">
        <path d={smooth("300,400 330,415 390,370 430,315 460,340 490,430 510,480 550,520")} />
        <path d={smooth("410,1000 470,960 580,935")} />
        <path d={smooth("330,1180 420,1125 540,1120 620,1110")} />
        <path d={smooth("530,610 600,700 660,670")} />
        <path d={smooth("2240,1010 2300,1020 2330,990")} />
      </g>
      <Lines items={WHITE} color="#ffffff" casing="#c4c4c4" width={8} cased={11} />
      <g fill="none" stroke="#4040f0" strokeWidth="4" strokeDasharray="4 7">
        {PATHS.map((s, i) => <path key={i} d={smooth(s)} />)}
      </g>
      <Lines items={RAIL} color="#707070" width={10} />
      <g fill="none" stroke="#d8d8d8" strokeWidth="2.5" strokeDasharray="20 20">
        {RAIL.map((s, i) => <path key={i} d={smooth(s)} />)}
      </g>
      <path d="M775 368L1015 460" stroke="#707070" strokeWidth="8" strokeDasharray="20 14" />
      <Lines items={YELLOW} color="#f7fabf" casing="#b9bd80" width={12.5} cased={16.5} />
      <Lines items={ORANGE} color="#fcd6a4" casing="#c39449" width={13} cased={17} />
      <Lines items={RED} color="#f9b29c" casing="#d3705a" width={17} cased={20.5} />
      <Lines items={MOTORWAY} color="#e892a2" casing="#dc5a78" width={21} cased={24} />
      <g fill="#f9b29c" stroke="#d3705a" strokeWidth="3">
        <circle cx="1484" cy="630" r="12" />
        <circle cx="1484" cy="1018" r="12" />
        <circle cx="1642" cy="966" r="14" />
      </g>
      <circle cx="1762" cy="450" r="15" fill="#fcd6a4" stroke="#c39449" strokeWidth="3" />
      <circle cx="1834" cy="650" r="16" fill="#a5d8c0" stroke="#fcd6a4" strokeWidth="9" />
      {STATIONS.map((t) => {
        const [x, y] = t.split(",").map(Number);
        return <rect key={t} x={x - 9} y={y - 9} width="18" height="18" fill="#7981b0" />;
      })}
      {PEAKS.map((t) => {
        const [x, y] = t.split(",").map(Number);
        return <path key={t} d={`M${x} ${y - 11}l11 19h-22z`} fill="#d08f55" />;
      })}
      <path d="M220 1145L248 1115M222 1113L250 1143M218 1122l10-10M240 1112l12 10" stroke="#eeeaea" strokeWidth="5" />
      {PLACES.map(([t, x, y, w]) => (
        <MapLabel key={t} text={t} x={x} y={y} w={w} color="#2a2a2a" size={37} />
      ))}
      <MapLabel text="Bristol" x={1375} y={804} w={131} color="#2a2a2a" size={44} />
      <MapLabel text="Kingswood" x={2930} y={552} w={199} color="#2a2a2a" size={39} />
      {SMALL.map(([t, x, y, w, c, s, it, rot], i) => (
        <MapLabel key={i} text={t} x={x} y={y} w={w} color={c} size={s} italic={it} rotate={rot} />
      ))}
      <rect x="10" y="343" width="42" height="50" rx="5" fill="#f8e4cf" stroke="#d9a98a" strokeWidth="3" />
      {SHIELDS.map(([t, x, y, w, bg, bd, fg], i) => (
        <g key={i}>
          <rect x={x - w / 2} y={y - 25} width={w} height="50" rx="5" fill={bg} stroke={bd} strokeWidth="3" />
          <text x={x} y={y + 11} textAnchor="middle" fontSize="31" textLength={w - 30} fill={fg}>{t}</text>
        </g>
      ))}
    </svg>
  );
}

function Marker({ className }) {
  return (
    <svg className={"absolute h-[41px] w-[41px] overflow-visible " + className} viewBox="0 0 41 41">
      <defs>
        <linearGradient id="pinFill" x1="0" y1="0" x2="0" y2="1">
          <stop offset="0" stopColor="#3a8fcf" />
          <stop offset="1" stopColor="#1f72b5" />
        </linearGradient>
        <linearGradient id="pinShade" x1="0" y1="1" x2="1" y2="0">
          <stop offset="0" stopColor="#000" stopOpacity="0.85" />
          <stop offset="1" stopColor="#000" stopOpacity="0.15" />
        </linearGradient>
        <filter id="pinBlur" x="-30%" y="-30%" width="160%" height="160%">
          <feGaussianBlur stdDeviation="1.5" />
        </filter>
      </defs>
      <path d="M12.5 40C14 31 18 19 26 15c8-2 11 6 6 12-5 6-13 9-19.500 13z" fill="url(#pinShade)" filter="url(#pinBlur)" />
      <path d="M12.500 .5C5.900 .5 .5 5.900 .5 12.500c0 3 1 5.200 2.300 7.900L12.500 40.500l9.700-20.100c1.300-2.700 2.300-4.900 2.300-7.900C24.500 5.900 19.100 .5 12.500 .5z" fill="url(#pinFill)" stroke="#2a6fa5" />
      <circle cx="12.500" cy="13" r="4.400" fill="#fff" />
    </svg>
  );
}

function CrimePopup() {
  return (
    <div className="absolute left-[233px] top-[152px] z-10">
      <div className="absolute left-[99px] top-[52px] h-[17px] w-[17px] rotate-45 bg-white shadow-[0_3px_14px_rgba(0,0,0,0.4)]" />
      <div className="relative h-[62px] w-[216px] rounded-[12px] bg-white pt-[13px] pl-[20.5px] text-left text-[13px] leading-[17px] whitespace-nowrap text-[#333] shadow-[0_3px_14px_rgba(0,0,0,0.4)]">
        <p><strong>Crime:</strong> vehicle-crime</p>
        <p><strong>Street:</strong> On or near Clifton Hill</p>
        <span className="absolute top-px right-0 h-6 w-6 text-center text-[18px] leading-6 text-[#757575]">×</span>
      </div>
      <div className="absolute left-[99px] top-[52px] h-[17px] w-[17px] rotate-45 bg-white" />
    </div>
  );
}

function ZoomControl() {
  return (
    <div className="absolute left-[10px] top-[10px] flex w-[34px] flex-col rounded-[4px] border-2 border-black/20 bg-clip-padding font-['Liberation_Mono',monospace] text-[24px] leading-[34px] font-bold text-black">
      <span className="h-[31px] rounded-t-[2px] border-b border-[#ccc] bg-white text-center">+</span>
      <span className="h-[30px] rounded-b-[2px] bg-white text-center">−</span>
    </div>
  );
}

function CrimeMap() {
  return (
    <div className="relative mt-[15px] ml-px h-[500px] w-[1000px] shrink-0 rounded-[10px] shadow-[0_5px_15px_rgba(0,0,0,0.35)]">
      <div className="relative h-full w-full overflow-hidden rounded-[10px]">
        <MapCanvas />
        <Marker className="left-[337px] top-[205px]" />
        <Marker className="left-[328px] top-[219px]" />
        <Marker className="left-[579px] top-[151px]" />
        <ZoomControl />
        <CrimePopup />
        <div className="absolute right-0 bottom-0 flex h-[17px] items-center bg-white/80 px-[5px] text-[12px] leading-[17px] whitespace-pre text-[#333]">
          <svg className="mr-1 h-2 w-3" viewBox="0 0 12 8">
            <path fill="#4C7BE1" d="M0 0h12v4H0z" />
            <path fill="#FFD500" d="M0 4h12v3H0z" />
            <path fill="#E0BC00" d="M0 7h12v1H0z" />
          </svg>
          <span className="text-[#0078a8]">Leaflet</span>
          <span> | © OpenStreetMap contributors</span>
        </div>
      </div>
    </div>
  );
}

export default function App() {
  return (
    <div className="flex h-[948px] w-full overflow-hidden bg-[#0b4a78] pl-1 font-['Liberation_Sans',Arial,sans-serif]">
      <div className="flex flex-1 flex-col bg-[#f4f4f4]">
        <header className="z-10 grid h-[100px] shrink-0 grid-cols-[1fr_auto_1fr] bg-[#2b376b] text-white shadow-[0_4px_10px_rgba(0,0,0,0.2)]">
          <nav className="pt-[34px] pl-10 text-base leading-6">Home</nav>
          <div className="pt-[15px] pl-[2px] text-center text-[#f4f4f4]">
            <h1 className="text-[32px] leading-[37px] font-bold">Bristol's Find a Crime</h1>
            <p className="mt-[10px] text-base leading-[18px]">Explore the history of crimes in Bristol's neighbourhoods.</p>
          </div>
        </header>
        <main className="flex flex-1 flex-col items-center pt-[29px] pl-px">
          <h2 className="ml-[2px] flex h-[29px] items-center gap-[7px] text-[24px] leading-[29px] font-bold text-[#333]">
            Find a Crime
            <FaMagnifyingGlass className="h-6 w-6" />
          </h2>
          <input
            defaultValue="clifton"
            className="mt-[20px] h-[46px] w-[1241px] rounded-[8px] border-2 border-[#2b376b] bg-white px-3 text-base text-black"
          />
          <button className="mt-[15px] ml-px h-[42px] w-[200px] rounded-[8px] bg-linear-to-r/srgb from-[#2b376b] to-[#005eb8] pl-px text-base font-bold text-white">
            Search
          </button>
          <CrimeMap />
        </main>
        <footer className="flex h-[89px] shrink-0 flex-col items-center bg-[#2b376b] pt-[28px] pl-px text-[14px] leading-[18px] text-white">
          <p>© 2025 Bristol's Find a Crime. All rights reserved.</p>
          <div className="mt-[12px] flex">
            <a className="text-[#ffcc00]">About</a>
            <span className="mx-[19px]">|</span>
            <a className="text-[#ffcc00]">Contact Us</a>
          </div>
        </footer>
      </div>
    </div>
  );
}
